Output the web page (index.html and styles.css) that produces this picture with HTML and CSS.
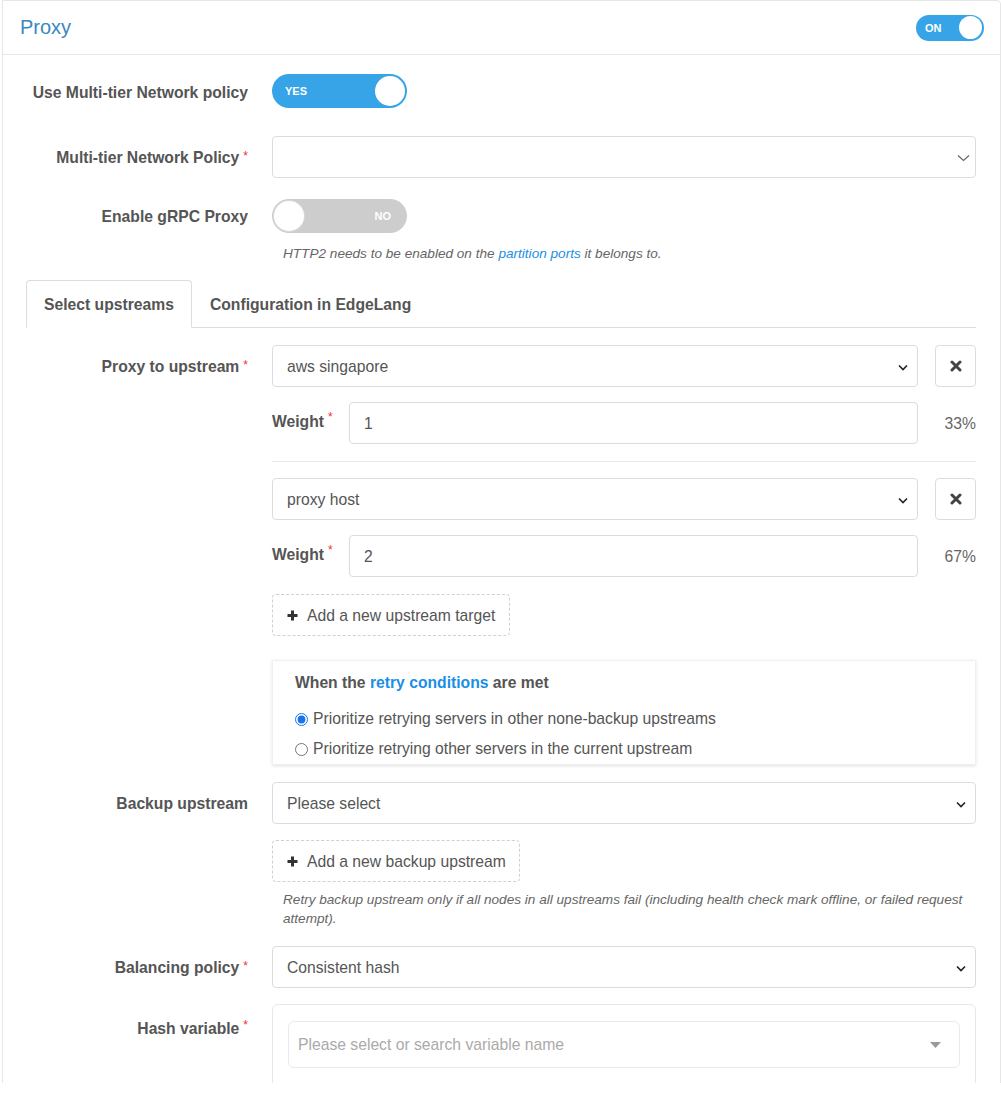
FILE: index.html
```html
<!DOCTYPE html>
<html>
<head>
<meta charset="utf-8">
<link rel="stylesheet" href="styles.css">
</head>
<body>
<div class="viewport">
  <div class="card">
    <div class="card-header">
      <h2 class="title">Proxy</h2>
      <div class="switch switch-sm switch-on"><span class="switch-text">ON</span><span class="knob"></span></div>
    </div>
    <div class="card-body">
      <div class="row row-first">
        <div class="label label-toggle">Use Multi-tier Network policy</div>
        <div class="control">
          <div class="switch switch-lg switch-on"><span class="switch-text">YES</span><span class="knob"></span></div>
        </div>
      </div>

      <div class="row row-mtnp">
        <div class="label">Multi-tier Network Policy<span class="req">*</span></div>
        <div class="control">
          <div class="select select-light">
            <span class="select-text"></span>
            <svg class="chev-thin" width="13" height="8" viewBox="0 0 13 8"><path d="M1 1.5 L6.5 6.5 L12 1.5" fill="none" stroke="#666" stroke-width="1.2"/></svg>
          </div>
        </div>
      </div>

      <div class="row row-grpc">
        <div class="label label-toggle2">Enable gRPC Proxy</div>
        <div class="control">
          <div class="switch switch-lg switch-off"><span class="knob"></span><span class="switch-text">NO</span></div>
        </div>
      </div>
      <p class="help help-grpc">HTTP2 needs to be enabled on the <a class="link">partition ports</a> it belongs to.</p>

      <div class="tabs">
        <div class="tab tab-active">Select upstreams</div>
        <div class="tab">Configuration in EdgeLang</div>
      </div>

      <div class="row row-proxy">
        <div class="label">Proxy to upstream<span class="req">*</span></div>
        <div class="control">
          <div class="upstream">
            <div class="line">
              <div class="select grow"><span class="select-text">aws singapore</span><svg class="chev" width="10" height="7" viewBox="0 0 10 7"><path d="M1 1.5 L5 5.5 L9 1.5" fill="none" stroke="#222" stroke-width="1.6"/></svg></div>
              <div class="icon-btn"><svg width="12" height="12" viewBox="0 0 12 12"><path d="M2 2 L10 10 M10 2 L2 10" stroke="#444" stroke-width="3" stroke-linecap="round"/></svg></div>
            </div>
            <div class="line line-weight">
              <div class="weight-label">Weight<span class="req">*</span></div>
              <div class="input grow">1</div>
              <div class="pct">33%</div>
            </div>
          </div>
          <div class="sep"></div>
          <div class="upstream">
            <div class="line">
              <div class="select grow"><span class="select-text">proxy host</span><svg class="chev" width="10" height="7" viewBox="0 0 10 7"><path d="M1 1.5 L5 5.5 L9 1.5" fill="none" stroke="#222" stroke-width="1.6"/></svg></div>
              <div class="icon-btn"><svg width="12" height="12" viewBox="0 0 12 12"><path d="M2 2 L10 10 M10 2 L2 10" stroke="#444" stroke-width="3" stroke-linecap="round"/></svg></div>
            </div>
            <div class="line line-weight">
              <div class="weight-label">Weight<span class="req">*</span></div>
              <div class="input grow">2</div>
              <div class="pct">67%</div>
            </div>
          </div>
          <div class="add-btn add-upstream"><svg class="plus" width="11" height="11" viewBox="0 0 11 11"><path d="M5.5 0.5 V10.5 M0.5 5.5 H10.5" stroke="#333" stroke-width="3"/></svg>Add a new upstream target</div>
          <div class="retry">
            <div class="retry-title">When the <a class="link">retry conditions</a> are met</div>
            <label class="radio"><input type="radio" name="retry" checked> Prioritize retrying servers in other none-backup upstreams</label>
            <label class="radio"><input type="radio" name="retry"> Prioritize retrying other servers in the current upstream</label>
          </div>
        </div>
      </div>

      <div class="row row-backup">
        <div class="label">Backup upstream</div>
        <div class="control">
          <div class="select"><span class="select-text">Please select</span><svg class="chev" width="10" height="7" viewBox="0 0 10 7"><path d="M1 1.5 L5 5.5 L9 1.5" fill="none" stroke="#222" stroke-width="1.6"/></svg></div>
          <div class="add-btn add-backup"><svg class="plus" width="11" height="11" viewBox="0 0 11 11"><path d="M5.5 0.5 V10.5 M0.5 5.5 H10.5" stroke="#333" stroke-width="3"/></svg>Add a new backup upstream</div>
          <p class="help help-backup">Retry backup upstream only if all nodes in all upstreams fail (including health check mark offline, or failed request attempt).</p>
        </div>
      </div>

      <div class="row row-balance">
        <div class="label">Balancing policy<span class="req">*</span></div>
        <div class="control">
          <div class="select"><span class="select-text">Consistent hash</span><svg class="chev" width="10" height="7" viewBox="0 0 10 7"><path d="M1 1.5 L5 5.5 L9 1.5" fill="none" stroke="#222" stroke-width="1.6"/></svg></div>
        </div>
      </div>

      <div class="row row-hash">
        <div class="label label-hash">Hash variable<span class="req">*</span></div>
        <div class="control">
          <div class="hash-box">
            <div class="hash-select">
              <span class="placeholder">Please select or search variable name</span>
              <svg width="11" height="6" viewBox="0 0 11 6"><path d="M0 0 H11 L5.5 6 Z" fill="#999"/></svg>
            </div>
          </div>
        </div>
      </div>
    </div>
  </div>
</div>
</body>
</html>
```

FILE: styles.css
```css
* { box-sizing: border-box; }
html, body { margin: 0; padding: 0; background: #fff; }
body {
  font-family: "Liberation Sans", Arial, sans-serif;
  font-size: 15.7px;
  color: #555;
}
.viewport {
  width: 1001px;
  height: 1083px;
  overflow: hidden;
}
.card {
  margin-left: 2px;
  width: 999px;
  border: 1px solid #e6e6e6;
  border-radius: 0 4px 4px 4px;
  background: #fff;
  min-height: 1200px;
}
.card-header {
  height: 54px;
  border-bottom: 1px solid #e6e6e6;
  display: flex;
  align-items: center;
  justify-content: space-between;
  padding: 0 16px 0 17px;
}
.title {
  margin: 0;
  font-size: 20px;
  font-weight: normal;
  color: #3a87bf;
}
.card-body {
  padding: 0 24px 0 23px;
  display: flex;
  flex-direction: column;
}

/* switches */
.switch {
  display: flex;
  align-items: center;
  justify-content: space-between;
  border-radius: 20px;
  color: #fff;
  font-weight: bold;
  font-size: 11px;
}
.switch-on { background: #36a4e6; }
.switch-off { background: #cdcdcd; }
.switch .knob {
  background: #fff;
  border-radius: 50%;
  display: block;
}
.switch-lg { width: 135px; height: 34px; padding: 0 2px; }
.switch-lg .knob { width: 30px; height: 30px; }
.switch-lg.switch-on .switch-text { padding-left: 11px; }
.switch-lg.switch-off .switch-text { padding-right: 14px; }
.switch-lg.switch-off .knob { box-shadow: 0 0 0 1px #d8d8d8; }
.switch-sm { width: 68px; height: 26px; padding: 0 2px; }
.switch-sm .knob { width: 23px; height: 23px; }
.switch-sm .switch-text { padding-left: 7px; }

/* rows */
.row {
  display: grid;
  grid-template-columns: 222px 704px;
  column-gap: 24px;
  align-items: start;
}
.label {
  display: flex;
  align-items: center;
  justify-content: flex-end;
  height: 42px;
  padding-top: 2px;
  font-weight: bold;
  color: #555;
  white-space: nowrap;
}
.label-toggle { height: 34px; padding-top: 3px; }
.label-toggle2 { height: 33px; }
.label-hash { height: 46px; margin-top: 0; align-items: flex-start; padding-top: 16px; }
.req {
  color: #ee3333;
  font-size: 12px;
  align-self: flex-start;
  margin-left: 4px;
  margin-top: 11px;
  font-weight: normal;
}
.label-hash .req { margin-top: -2px; }
.row-first { margin-top: 19px; }
.row-mtnp { margin-top: 28px; }
.row-grpc { margin-top: 21px; }
.row-proxy { margin-top: 17px; }
.row-backup { margin-top: 17px; }
.row-balance { margin-top: 18px; }
.row-hash { margin-top: 16px; }

.help {
  margin: 0;
  font-size: 13.6px;
  font-style: italic;
  color: #666;
  line-height: 18px;
}
.help-grpc { margin: 12px 0 0 257px; }
.help-backup { margin: 8px 0 0 11px; line-height: 19px; }
.link { color: #1a8fe6; text-decoration: none; }

/* tabs */
.tabs {
  margin-top: 17px;
  display: flex;
  border-bottom: 1px solid #ddd;
}
.tab {
  height: 48px;
  margin-bottom: -1px;
  padding: 0 17px;
  border: 1px solid transparent;
  border-radius: 4px 4px 0 0;
  display: flex;
  align-items: center;
  font-weight: bold;
  color: #555;
  padding-top: 1px;
}
.tab-active {
  border-color: #ddd;
  border-bottom-color: #fff;
  background: #fff;
}

/* controls */
.select, .input {
  height: 42px;
  border: 1px solid #dcdcdc;
  border-radius: 4px;
  display: flex;
  align-items: center;
  justify-content: space-between;
  padding: 2px 9px 0 14px;
  color: #555;
  background: #fff;
}
.select-light { padding-right: 5px; }
.grow { flex: 1; }
.line { display: flex; align-items: center; gap: 17px; }
.line-weight { margin-top: 15px; gap: 0; }
.weight-label {
  width: 77px;
  font-weight: bold;
  display: flex;
  align-self: stretch;
  align-items: center;
  padding-bottom: 2px;
}
.weight-label .req { margin-top: 8px; }
.pct { width: 58px; text-align: right; color: #666; padding-top: 2px; }
.icon-btn {
  width: 41px;
  height: 42px;
  border: 1px solid #dcdcdc;
  border-radius: 4px;
  display: flex;
  align-items: center;
  justify-content: center;
}
.sep { margin: 17px 0 16px; height: 1px; background: #e8e8e8; }
.add-btn {
  height: 42px;
  border: 1px dashed #d0d0d0;
  border-radius: 4px;
  display: flex;
  align-items: center;
  padding-left: 14px;
  padding-top: 1px;
  color: #555;
}
.plus { margin-right: 9px; }
.add-upstream { width: 238px; margin-top: 17px; }
.add-backup { width: 248px; margin-top: 16px; }

.retry {
  margin-top: 24px;
  height: 105px;
  border: 1px solid #f0f0f0;
  box-shadow: 0 1px 3px rgba(0,0,0,0.12);
  padding: 13px 22px 0;
}
.retry-title { font-weight: bold; color: #555; line-height: 18px; }
.radio {
  display: flex;
  align-items: center;
  line-height: 18px;
  color: #555;
}
.radio:first-of-type { margin-top: 18px; }
.radio + .radio { margin-top: 12px; }
.radio input {
  margin: 0 5px 0 0;
  width: 13px;
  height: 13px;
  accent-color: #1a73e8;
}

.hash-box {
  height: 120px;
  border: 1px solid #e6e6e6;
  border-radius: 6px;
  padding: 16px 15px 0;
}
.hash-select {
  height: 47px;
  border: 1px solid #eaeaea;
  border-radius: 6px;
  display: flex;
  align-items: center;
  justify-content: space-between;
  padding: 1px 18px 0 9px;
}
.placeholder { color: #aaa; }
```
